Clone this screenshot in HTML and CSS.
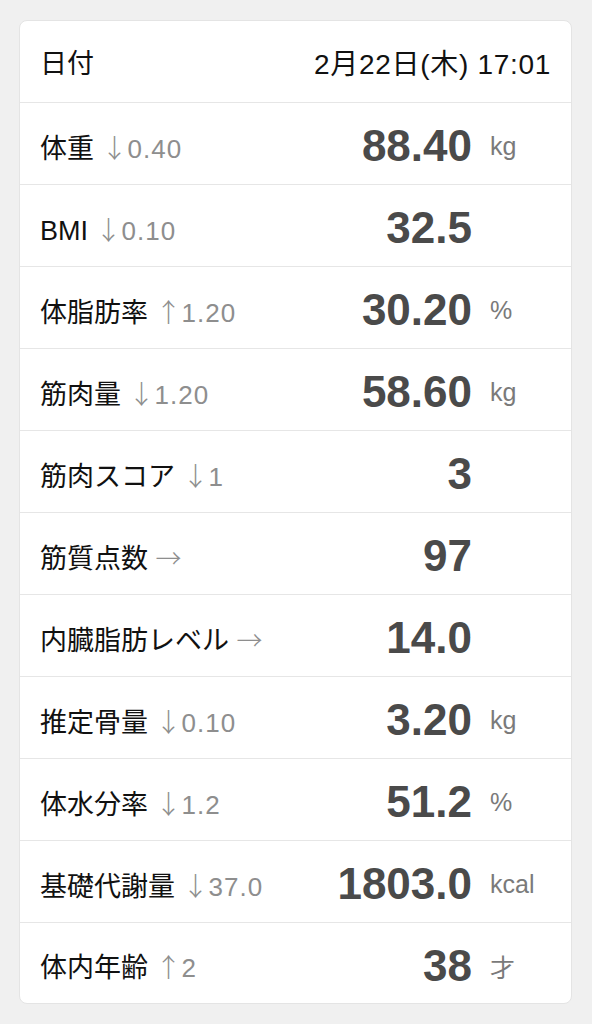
FILE: index.html
```html
<!DOCTYPE html>
<html lang="ja">
<head>
    <meta charset="UTF-8">
    <meta name="viewport" content="width=device-width, initial-scale=1.0">
    <title>体組成</title>
    <link rel="stylesheet" href="styles.css">
</head>
<body>
    <div class="card">
        <div class="row header">
            <span class="label">日付</span>
            <span class="date">2月22日(木) 17:01</span>
        </div>
        <div class="row">
            <span class="label">体重 <span class="delta"><span class="arrow">↓</span>0.40</span></span>
            <span class="value">88.40</span>
            <span class="unit">kg</span>
        </div>
        <div class="row">
            <span class="label">BMI <span class="delta"><span class="arrow">↓</span>0.10</span></span>
            <span class="value">32.5</span>
            <span class="unit"></span>
        </div>
        <div class="row">
            <span class="label">体脂肪率 <span class="delta"><span class="arrow">↑</span>1.20</span></span>
            <span class="value">30.20</span>
            <span class="unit">%</span>
        </div>
        <div class="row">
            <span class="label">筋肉量 <span class="delta"><span class="arrow">↓</span>1.20</span></span>
            <span class="value">58.60</span>
            <span class="unit">kg</span>
        </div>
        <div class="row">
            <span class="label">筋肉スコア <span class="delta"><span class="arrow">↓</span>1</span></span>
            <span class="value">3</span>
            <span class="unit"></span>
        </div>
        <div class="row">
            <span class="label">筋質点数 <span class="delta"><span class="arrow">→</span></span></span>
            <span class="value">97</span>
            <span class="unit"></span>
        </div>
        <div class="row">
            <span class="label">内臓脂肪レベル <span class="delta"><span class="arrow">→</span></span></span>
            <span class="value">14.0</span>
            <span class="unit"></span>
        </div>
        <div class="row">
            <span class="label">推定骨量 <span class="delta"><span class="arrow">↓</span>0.10</span></span>
            <span class="value">3.20</span>
            <span class="unit">kg</span>
        </div>
        <div class="row">
            <span class="label">体水分率 <span class="delta"><span class="arrow">↓</span>1.2</span></span>
            <span class="value">51.2</span>
            <span class="unit">%</span>
        </div>
        <div class="row">
            <span class="label">基礎代謝量 <span class="delta"><span class="arrow">↓</span>37.0</span></span>
            <span class="value">1803.0</span>
            <span class="unit">kcal</span>
        </div>
        <div class="row">
            <span class="label">体内年齢 <span class="delta"><span class="arrow">↑</span>2</span></span>
            <span class="value">38</span>
            <span class="unit">才</span>
        </div>
    </div>
</body>
</html>
```

FILE: styles.css
```css
body {
    margin: 0;
    padding: 20px 20px 20px 19px;
    background-color: #f0f0f0;
    font-family: "Liberation Sans", "Noto Sans CJK JP", sans-serif;
    color: #111;
}

.card {
    background-color: #fff;
    border: 1px solid #e4e4e4;
    border-radius: 8px;
}

.row {
    display: flex;
    align-items: center;
    height: 82px;
    padding: 5px 20px 0 20px;
    box-sizing: border-box;
    border-bottom: 1px solid #e6e6e6;
}

.row:last-child {
    height: 80px;
    border-bottom: none;
}

.header {
    padding-top: 0;
    justify-content: space-between;
}

.label {
    flex: 1;
    font-size: 27px;
    white-space: nowrap;
}

.date {
    font-size: 28px;
    letter-spacing: 0.7px;
}

.delta {
    color: #8e8e8e;
    font-size: 26px;
    letter-spacing: 1px;
}

.arrow {
    font-family: "Noto Sans CJK JP", sans-serif;
    font-weight: 300;
    letter-spacing: 0;
}

.value {
    font-size: 44px;
    font-weight: bold;
    color: #4a4a4a;
}

.unit {
    width: 61px;
    margin-left: 18px;
    font-size: 25px;
    color: #7a7a7a;
}
```
